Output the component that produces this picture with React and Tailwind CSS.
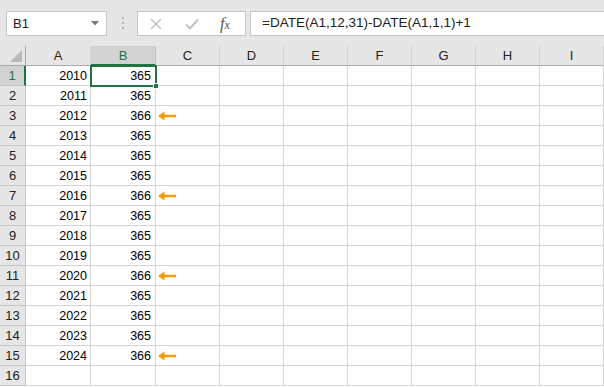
import React from "react";

const years = [2010, 2011, 2012, 2013, 2014, 2015, 2016, 2017, 2018, 2019, 2020, 2021, 2022, 2023, 2024];
const cols = ["A", "B", "C", "D", "E", "F", "G", "H", "I"];
const font = { fontFamily: '"Liberation Sans", Arial, sans-serif' };

const isLeap = (y) => (y % 4 === 0 && y % 100 !== 0) || y % 400 === 0;

function Arrow() {
  return (
    <svg width="19" height="10" viewBox="0 0 19 10" className="ml-[2px]">
      <path d="M0 5 L6.5 0.5 L6.5 3.7 L18 3.7 L18 6.3 L6.5 6.3 L6.5 9.5 Z" fill="#f79a00" />
    </svg>
  );
}

function Toolbar() {
  return (
    <div className="flex h-[46px] items-start bg-[#e6e6e6] pl-[6px] pt-[11px]">
      <div className="flex h-[25px] w-[101px] items-center justify-between border border-[#c6c6c6] bg-white pl-[6px] pr-[7px] text-[13px] text-[#222]">
        <span>B1</span>
        <svg width="8" height="5" viewBox="0 0 8 5">
          <path d="M0 0 L8 0 L4 4.5 Z" fill="#777" />
        </svg>
      </div>
      <div className="ml-[15px] mt-[6px] flex w-[3px] flex-col gap-[3px]">
        <span className="h-[2px] w-[2px] bg-[#b4b4b4]" />
        <span className="h-[2px] w-[2px] bg-[#b4b4b4]" />
        <span className="h-[2px] w-[2px] bg-[#b4b4b4]" />
      </div>
      <div className="ml-[12px] flex h-[25px] w-[109px] items-center border border-[#c6c6c6] bg-white">
        <svg width="12" height="12" viewBox="0 0 12 12" className="ml-[12px]">
          <path d="M1 1 L11 11 M11 1 L1 11" stroke="#bdbdbd" strokeWidth="1.4" fill="none" />
        </svg>
        <svg width="14" height="12" viewBox="0 0 14 12" className="ml-[23px]">
          <path d="M1 6.5 L5 10.5 L13 1.5" stroke="#c4c4c4" strokeWidth="2" fill="none" />
        </svg>
        <span className="ml-[21px] text-[16px] italic text-[#555]" style={{ fontFamily: '"Liberation Serif", serif' }}>
          f<span className="text-[12px]">x</span>
        </span>
      </div>
      <div className="ml-[4px] flex h-[25px] flex-1 items-center border border-r-0 border-[#c6c6c6] bg-white pl-[11px] text-[13.5px] text-[#222]">
        =DATE(A1,12,31)-DATE(A1,1,1)+1
      </div>
    </div>
  );
}

function HeaderRow() {
  return (
    <>
      <div className="relative h-[20px] border-b border-r border-[#ababab] bg-[#e6e6e6]">
        <svg width="12" height="12" viewBox="0 0 12 12" className="absolute bottom-[3px] right-[3px]">
          <path d="M12 0 L12 12 L0 12 Z" fill="#b9b9b9" />
        </svg>
      </div>
      {cols.map((c) => (
        <div
          key={c}
          className={
            c === "B"
              ? "flex h-[20px] items-center justify-center border-b-2 border-r border-b-[#217346] border-r-[#c6c6c6] bg-[#d2d2d2] pt-[2px] text-[13px] text-[#217346]"
              : "flex h-[20px] items-center justify-center border-b border-r border-b-[#ababab] border-r-[#d4d4d4] bg-[#e6e6e6] pt-[1px] text-[13px] text-[#222]"
          }
        >
          {c}
        </div>
      ))}
    </>
  );
}

function DataRow({ n, year }) {
  const days = year ? (isLeap(year) ? 366 : 365) : null;
  return (
    <>
      <div
        className={
          n === 1
            ? "flex h-[20px] items-center justify-center border-b border-r-2 border-b-[#c6c6c6] border-r-[#217346] bg-[#d2d2d2] pt-[1px] text-[13px] text-[#217346]"
            : "flex h-[20px] items-center justify-center border-b border-r border-[#c6c6c6] bg-[#e6e6e6] pt-[1px] text-[13px] text-[#222]"
        }
      >
        {n}
      </div>
      <div className="flex h-[20px] items-center justify-end border-b border-r border-[#d4d4d4] pr-[3px] pt-[1px] text-[12.5px] text-black">
        {year}
      </div>
      <div className="flex h-[20px] items-center justify-end border-b border-r border-[#d4d4d4] pr-[4px] pt-[1px] text-[12.5px] text-black">
        {days}
      </div>
      <div className="flex h-[20px] items-center border-b border-r border-[#d4d4d4] pt-[1px]">
        {days === 366 && <Arrow />}
      </div>
      {cols.slice(3).map((c) => (
        <div key={c} className="h-[20px] border-b border-r border-[#d4d4d4]" />
      ))}
    </>
  );
}

export default function App() {
  const rows = Array.from({ length: 16 }, (_, i) => i + 1);
  return (
    <div className="h-[387px] w-[604px] overflow-hidden bg-white" style={font}>
      <Toolbar />
      <div className="relative grid grid-cols-[26px_65px_65px_64px_64px_64px_64px_64px_64px_64px]">
        <HeaderRow />
        {rows.map((n) => (
          <DataRow key={n} n={n} year={years[n - 1]} />
        ))}
        <div className="absolute left-[90px] top-[19px] h-[22px] w-[67px] border-2 border-[#217346]">
          <div className="absolute -bottom-[4px] -right-[4px] h-[6px] w-[6px] border border-white bg-[#217346]" />
        </div>
      </div>
    </div>
  );
}
